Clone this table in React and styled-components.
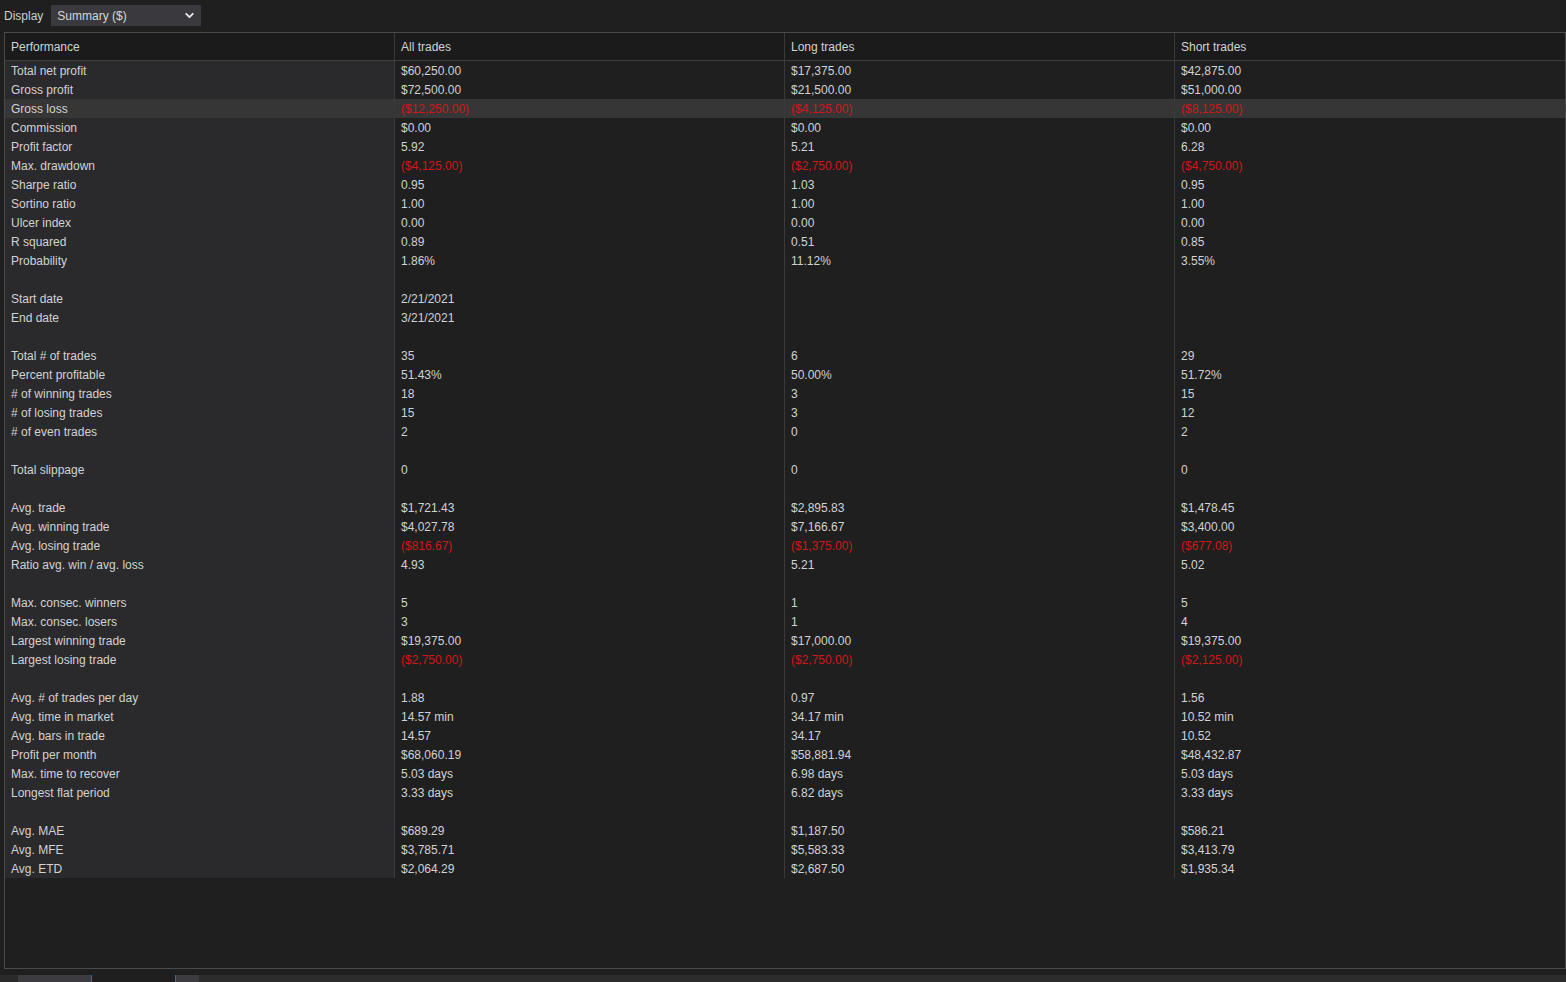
import React from 'react';
import styled, { createGlobalStyle } from 'styled-components';
import { ChevronDown } from 'lucide-react';

const GlobalStyle = createGlobalStyle`
  html, body {
    margin: 0;
    padding: 0;
    background: #1f1f1f;
    font-family: "Liberation Sans", Arial, sans-serif;
    font-size: 12px;
    color: #d2d2d2;
  }
`;

const Page = styled.div`
  width: 1566px;
  height: 982px;
  display: flex;
  flex-direction: column;
  overflow: hidden;
`;

const Toolbar = styled.div`
  height: 32px;
  display: flex;
  align-items: center;
  padding-left: 4px;
  padding-bottom: 1px;
  gap: 8px;
  box-sizing: border-box;
`;

const Label = styled.span`
  color: #cfcfcf;
  font-size: 12px;
  padding-top: 1px;
`;

const Select = styled.div`
  width: 150px;
  height: 21px;
  background: #3a3a3e;
  display: flex;
  align-items: center;
  justify-content: space-between;
  padding: 1px 5px 0 6px;
  box-sizing: border-box;
  color: #d6d6d6;
`;

const Panel = styled.div`
  margin-left: 4px;
  width: 1562px;
  height: 938px;
  border: 1px solid #4a4a4a;
  box-sizing: border-box;
  background: #1f1f1f;
`;

const Row = styled.div`
  display: grid;
  grid-template-columns: 389px 390px 390px 1fr;
  height: ${p => (p.$head ? '28px' : '19px')};
  background: ${p => (p.$selected ? '#363636' : 'transparent')};
  border-bottom: ${p => (p.$head ? '1px solid #3e3e3e' : 'none')};
  box-sizing: border-box;
`;

const Cell = styled.div`
  padding-left: 6px;
  padding-top: 2px;
  display: flex;
  align-items: center;
  white-space: nowrap;
  box-sizing: border-box;
  border-left: ${p => (p.$first ? 'none' : '1px solid #3a3a3a')};
  background: ${p =>
    p.$selected ? 'transparent' : p.$head ? '#1b1b1b' : p.$first ? '#2a2a2c' : 'transparent'};
  color: ${p => (p.$red ? '#d01818' : '#d2d2d2')};
`;

const Footer = styled.div`
  margin-top: 6px;
  height: 7px;
  background: #2c2c2c;
  display: flex;
`;

const Seg = styled.div`
  width: ${p => p.$w}px;
  background: ${p => p.$bg};
  border-right: ${p => (p.$blue ? '1px solid #2d6fb0' : 'none')};
`;

const R = 'red';
const rows = [
  ['Total net profit', '$60,250.00', '$17,375.00', '$42,875.00'],
  ['Gross profit', '$72,500.00', '$21,500.00', '$51,000.00'],
  ['Gross loss', '($12,250.00)', '($4,125.00)', '($8,125.00)', R, true],
  ['Commission', '$0.00', '$0.00', '$0.00'],
  ['Profit factor', '5.92', '5.21', '6.28'],
  ['Max. drawdown', '($4,125.00)', '($2,750.00)', '($4,750.00)', R],
  ['Sharpe ratio', '0.95', '1.03', '0.95'],
  ['Sortino ratio', '1.00', '1.00', '1.00'],
  ['Ulcer index', '0.00', '0.00', '0.00'],
  ['R squared', '0.89', '0.51', '0.85'],
  ['Probability', '1.86%', '11.12%', '3.55%'],
  ['', '', '', ''],
  ['Start date', '2/21/2021', '', ''],
  ['End date', '3/21/2021', '', ''],
  ['', '', '', ''],
  ['Total # of trades', '35', '6', '29'],
  ['Percent profitable', '51.43%', '50.00%', '51.72%'],
  ['# of winning trades', '18', '3', '15'],
  ['# of losing trades', '15', '3', '12'],
  ['# of even trades', '2', '0', '2'],
  ['', '', '', ''],
  ['Total slippage', '0', '0', '0'],
  ['', '', '', ''],
  ['Avg. trade', '$1,721.43', '$2,895.83', '$1,478.45'],
  ['Avg. winning trade', '$4,027.78', '$7,166.67', '$3,400.00'],
  ['Avg. losing trade', '($816.67)', '($1,375.00)', '($677.08)', R],
  ['Ratio avg. win / avg. loss', '4.93', '5.21', '5.02'],
  ['', '', '', ''],
  ['Max. consec. winners', '5', '1', '5'],
  ['Max. consec. losers', '3', '1', '4'],
  ['Largest winning trade', '$19,375.00', '$17,000.00', '$19,375.00'],
  ['Largest losing trade', '($2,750.00)', '($2,750.00)', '($2,125.00)', R],
  ['', '', '', ''],
  ['Avg. # of trades per day', '1.88', '0.97', '1.56'],
  ['Avg. time in market', '14.57 min', '34.17 min', '10.52 min'],
  ['Avg. bars in trade', '14.57', '34.17', '10.52'],
  ['Profit per month', '$68,060.19', '$58,881.94', '$48,432.87'],
  ['Max. time to recover', '5.03 days', '6.98 days', '5.03 days'],
  ['Longest flat period', '3.33 days', '6.82 days', '3.33 days'],
  ['', '', '', ''],
  ['Avg. MAE', '$689.29', '$1,187.50', '$586.21'],
  ['Avg. MFE', '$3,785.71', '$5,583.33', '$3,413.79'],
  ['Avg. ETD', '$2,064.29', '$2,687.50', '$1,935.34'],
];

export default function App() {
  return (
    <Page>
      <GlobalStyle />
      <Toolbar>
        <Label>Display</Label>
        <Select>
          <span>Summary ($)</span>
          <ChevronDown size={13} strokeWidth={3.5} color="#e6e6e6" />
        </Select>
      </Toolbar>
      <Panel>
        <Row $head>
          <Cell $first $head>Performance</Cell>
          <Cell $head>All trades</Cell>
          <Cell $head>Long trades</Cell>
          <Cell $head>Short trades</Cell>
        </Row>
        {rows.map(([label, a, l, s, red, sel], i) => (
          <Row key={i} $selected={sel}>
            <Cell $first $selected={sel}>{label}</Cell>
            <Cell $red={!!red} $selected={sel}>{a}</Cell>
            <Cell $red={!!red} $selected={sel}>{l}</Cell>
            <Cell $red={!!red} $selected={sel}>{s}</Cell>
          </Row>
        ))}
      </Panel>
      <Footer>
        <Seg $w={18} $bg="#2a2a2a" />
        <Seg $w={73} $bg="#3c3c40" $blue />
        <Seg $w={83} $bg="#1f1f1f" $blue />
        <Seg $w={23} $bg="#3c3c40" />
      </Footer>
    </Page>
  );
}
